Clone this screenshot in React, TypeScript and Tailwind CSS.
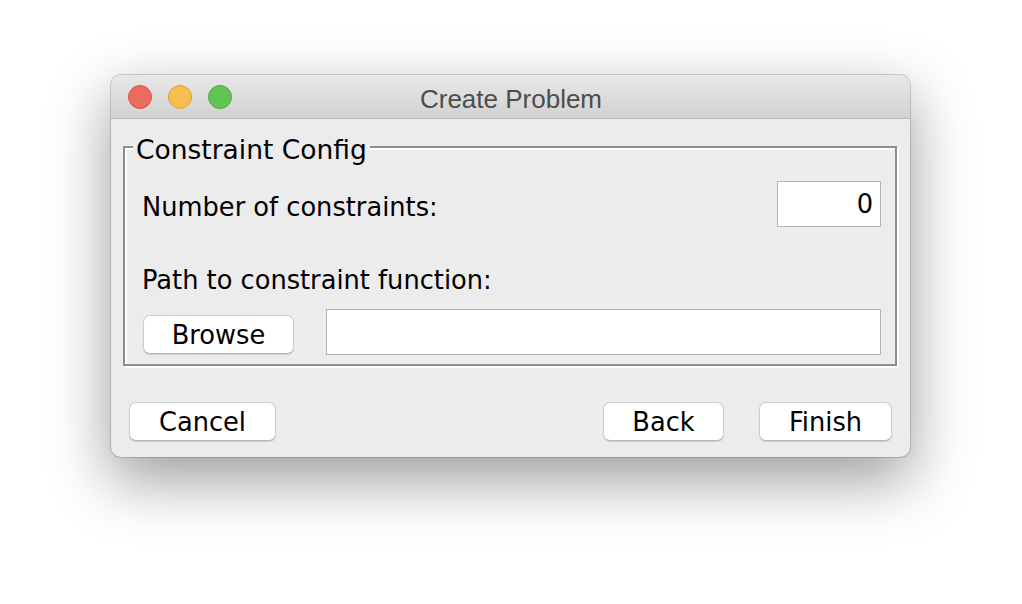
import React from 'react'

const body = { fontFamily: '"DejaVu Sans", "Open Sans", sans-serif' }

const Light = ({ fill, ring }: { fill: string; ring: string }) => (
  <div className={`w-[24px] h-[24px] rounded-full border ${fill} ${ring}`} />
)

const AquaButton = ({ label, w }: { label: string; w: string }) => (
  <button
    className={`${w} h-[39px] pt-[2px] rounded-[7px] bg-white border border-[#cdcdcd] border-b-[#b5b5b5] shadow-[0_1px_1px_rgba(0,0,0,0.12)] text-[25.7px] leading-none text-black flex items-center justify-center`}
    style={body}
  >
    {label}
  </button>
)

export default function App() {
  return (
    <div className="w-[1022px] h-[604px] bg-white pt-[75px] pl-[111px] overflow-hidden">
      <div className="w-[799px] h-[382px] rounded-[10px] bg-[#ececec] overflow-hidden shadow-[0_0_0_1px_rgba(0,0,0,0.16),0_22px_60px_2px_rgba(0,0,0,0.38)]">
        {/* title bar */}
        <div className="h-[44px] grid grid-cols-[1fr_auto_1fr] items-center border-b border-[#bababa] bg-gradient-to-b from-[#e8e8e8] to-[#d2d2d2]">
          <div className="flex items-center gap-[16px] pl-[17px]">
            <Light fill="bg-[#ed6a5e]" ring="border-[#d4564b]" />
            <Light fill="bg-[#f5bf4f]" ring="border-[#d8a240]" />
            <Light fill="bg-[#61c454]" ring="border-[#52a842]" />
          </div>
          <div
            className="text-[26px] leading-none text-[#4d4d4d] pt-[4px] pl-[1px]"
            style={{ fontFamily: '"Liberation Sans", Arial, sans-serif' }}
          >
            Create Problem
          </div>
          <div />
        </div>

        {/* group box */}
        <div className="pt-[27px] pl-[12px]" style={body}>
          <div className="relative w-[774px] h-[220px] border-2 border-[#8d8d8d] shadow-[2px_2px_0_#ffffff,inset_2px_2px_0_#ffffff]">
            <span className="absolute -top-[13px] left-[8px] px-[3px] bg-[#ececec] text-[26.5px] leading-[30px] text-black">
              Constraint Config
            </span>
            <div className="flex flex-col pt-[33px] pl-[17px] pr-[14px] pb-[9px]">
              <div className="flex items-center justify-between h-[46px]">
                <span className="text-[25.7px] leading-[30px] text-black pt-[5px]">Number of constraints:</span>
                <div className="w-[104px] h-[46px] bg-white border border-[#b3b3b3] flex items-center justify-end pr-[7px] text-[25.7px] text-black">
                  0
                </div>
              </div>
              <span className="mt-[38px] text-[25.7px] leading-[30px] text-black">Path to constraint function:</span>
              <div className="mt-[14px] flex items-end gap-[32px] h-[46px]">
                <div className="mb-[1px] pl-[1px]">
                  <AquaButton label="Browse" w="w-[151px]" />
                </div>
                <div className="flex-1 h-[46px] bg-white border border-[#b3b3b3]" />
              </div>
            </div>
          </div>
        </div>

        {/* footer buttons */}
        <div className="flex items-center mt-[36px] px-[18px]" style={body}>
          <AquaButton label="Cancel" w="w-[147px]" />
          <div className="flex-1" />
          <div className="flex gap-[35px]">
            <AquaButton label="Back" w="w-[121px]" />
            <AquaButton label="Finish" w="w-[133px]" />
          </div>
        </div>
      </div>
    </div>
  )
}
